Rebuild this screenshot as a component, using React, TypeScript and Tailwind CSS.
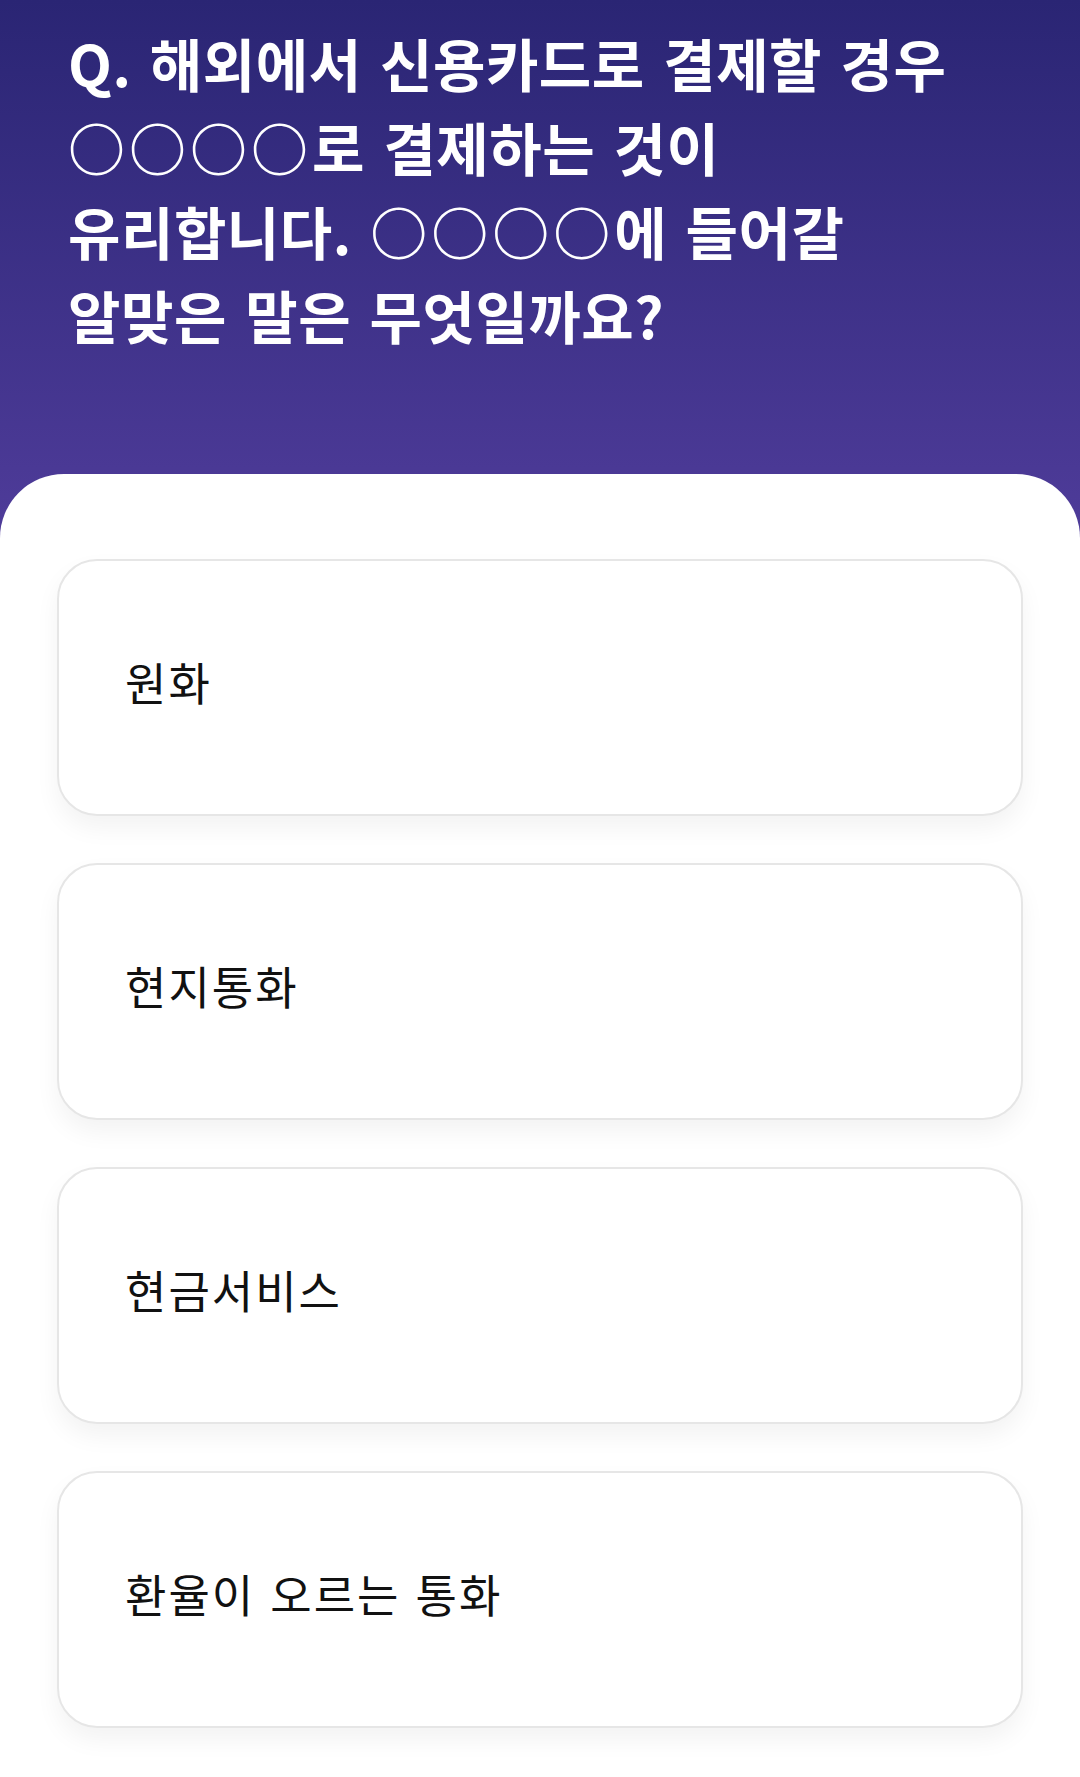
import React from 'react';

const options = ['원화', '현지통화', '현금서비스', '환율이 오르는 통화'];

const Blank: React.FC = () => <span className="tracking-[4px]">○○○○</span>;

const App: React.FC = () => {
  return (
    <div
      className="min-h-[1777px] w-[1080px] bg-[linear-gradient(180deg,#2a2574_0px,#4f3c9a_540px,#4f3c9a_100%)]"
      style={{ fontFamily: '"Noto Sans CJK KR", "Noto Sans", sans-serif' }}
    >
      {/* Question */}
      <div className="h-[474px] pl-[68px] pr-[20px] pt-[20px]">
        <h1 className="whitespace-nowrap text-[57px] font-bold leading-[84px] tracking-[0.5px] text-white [word-spacing:5px]">
          Q. 해외에서 신용카드로 결제할 경우
          <br />
          <Blank />로 결제하는 것이
          <br />
          유리합니다. <Blank />에 들어갈
          <br />
          알맞은 말은 무엇일까요?
        </h1>
      </div>

      {/* Options */}
      <div className="flex flex-col gap-[47px] rounded-t-[64px] bg-white px-[57px] pb-[51px] pt-[85px]">
        {options.map(opt => (
          <button
            key={opt}
            className="flex h-[257px] items-center rounded-[40px] border-2 border-[#e6e6e6] bg-white px-[66px] pb-[12px] text-left text-[45px] tracking-[2px] text-[#111] shadow-[0_12px_24px_rgba(0,0,0,0.05)] [word-spacing:3px]"
          >
            {opt}
          </button>
        ))}
      </div>
    </div>
  );
};

export default App;
